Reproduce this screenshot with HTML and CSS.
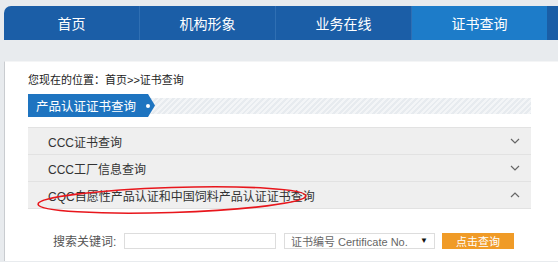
FILE: index.html
```html
<!DOCTYPE html>
<html lang="zh-CN">
<head>
    <meta charset="UTF-8">
    <meta name="viewport" content="width=device-width, initial-scale=1.0">
    <title>证书查询</title>
    <link rel="stylesheet" href="styles.css">
</head>
<body>
    <div class="nav">
        <a class="nav-item">首页</a>
        <a class="nav-item">机构形象</a>
        <a class="nav-item">业务在线</a>
        <a class="nav-item active">证书查询</a>
        <span class="nav-rest"></span>
    </div>

    <div class="panel">
        <div class="crumb">您现在的位置：首页&gt;&gt;证书查询</div>

        <div class="title-bar">
            <div class="title-tag">产品认证证书查询<span class="dot"></span></div>
        </div>

        <div class="accordion">
            <div class="acc-row">
                <span>CCC证书查询</span>
                <svg class="chev" width="10" height="6" viewBox="0 0 10 6"><polyline points="1,1 5,5 9,1"/></svg>
            </div>
            <div class="acc-row">
                <span>CCC工厂信息查询</span>
                <svg class="chev" width="10" height="6" viewBox="0 0 10 6"><polyline points="1,1 5,5 9,1"/></svg>
            </div>
            <div class="acc-row">
                <span>CQC自愿性产品认证和中国饲料产品认证证书查询</span>
                <svg class="chev" width="10" height="6" viewBox="0 0 10 6"><polyline points="1,5 5,1 9,5"/></svg>
            </div>
            <div class="acc-body">
                <label class="search-label">搜索关键词:</label>
                <input type="text" class="search-input">
                <div class="search-select">
                    <span>证书编号 Certificate No.</span>
                    <span class="caret">▼</span>
                </div>
                <button class="search-btn">点击查询</button>
            </div>
        </div>
    </div>

    <!-- hand-drawn red mark over the third row -->
    <svg class="mark" width="558" height="262" viewBox="0 0 558 262">
        <ellipse cx="172" cy="200" rx="134" ry="12.5" transform="rotate(-1.8 172 200)"/>
    </svg>
</body>
</html>
```

FILE: styles.css
```css
body {
    margin: 0;
    height: 262px;
    overflow: hidden;
    background: #e8ebee;
    font-family: "Liberation Sans", "Noto Sans CJK SC", sans-serif;
    position: relative;
}

.nav {
    display: flex;
    height: 34px;
    margin: 6px 0 0 4px;
    background: #1b5ea7;
    border-top-left-radius: 7px;
    overflow: hidden;
}

.nav-item {
    width: 135px;
    display: flex;
    align-items: center;
    justify-content: center;
    color: #fff;
    font-size: 14px;
    border-right: 1px solid #2f6fb3;
}

.nav-item.active {
    background: #1d7cc9;
    border-right: none;
}

.nav-rest {
    flex: 1;
    background: #1a5ea6;
}

.panel {
    margin: 21px 0 0 4px;
    height: 199px;
    background: #fff;
    border-left: 1px solid #c9ccd0;
    border-top: 1px solid #f4f5f6;
    padding-left: 23px;
}

.crumb {
    font-size: 11px;
    color: #222;
    margin-top: 11px;
    height: 14px;
    line-height: 14px;
}

.title-bar {
    margin-top: 7px;
    width: 503px;
    height: 23px;
    display: flex;
    align-items: center;
    background: repeating-linear-gradient(135deg, #f3f5f7 0 2px, #e7ebef 2px 4px) 0 4px / 100% 16px no-repeat;
}

.title-tag {
    width: 127px;
    height: 23px;
    box-sizing: border-box;
    padding-left: 8px;
    display: flex;
    align-items: center;
    white-space: nowrap;
    color: #fff;
    font-size: 12.5px;
    background: #1e74c0;
    clip-path: polygon(0 0, 120px 0, 127px 50%, 120px 100%, 0 100%);
}

.dot {
    width: 4px;
    height: 4px;
    border-radius: 50%;
    background: #fff;
    margin-left: 10px;
}

.accordion {
    margin-top: 10px;
    width: 503px;
}

.acc-row {
    height: 26px;
    display: flex;
    align-items: center;
    justify-content: space-between;
    padding: 0 11px 0 20px;
    background: #efefef;
    border-top: 1px solid #e2e2e2;
    font-size: 12px;
    color: #333;
}

.chev {
    fill: none;
    stroke: #666;
    stroke-width: 1.2;
}

.acc-body {
    display: flex;
    align-items: center;
    padding: 23px 0 0 25px;
    border-top: 1px solid #e2e2e2;
}

.search-label {
    font-size: 12px;
    color: #555;
    width: 71px;
}

.search-input {
    width: 152px;
    height: 16px;
    box-sizing: border-box;
    border: 1px solid #ddd;
    padding: 0;
    margin: 0 8px 0 0;
}

.search-select {
    width: 151px;
    height: 16px;
    box-sizing: border-box;
    border: 1px solid #ddd;
    display: flex;
    align-items: center;
    justify-content: space-between;
    padding: 0 6px 0 6px;
    font-size: 11px;
    color: #666;
}

.caret {
    font-size: 8px;
    color: #111;
}

.search-btn {
    margin-left: 7px;
    width: 72px;
    height: 16px;
    border: none;
    padding: 0;
    background: #f09b27;
    color: #fff;
    font-size: 11px;
    font-family: inherit;
}

.mark {
    position: absolute;
    left: 0;
    top: 0;
    fill: none;
    stroke: #e8161c;
    stroke-width: 1.6;
    pointer-events: none;
}
```
